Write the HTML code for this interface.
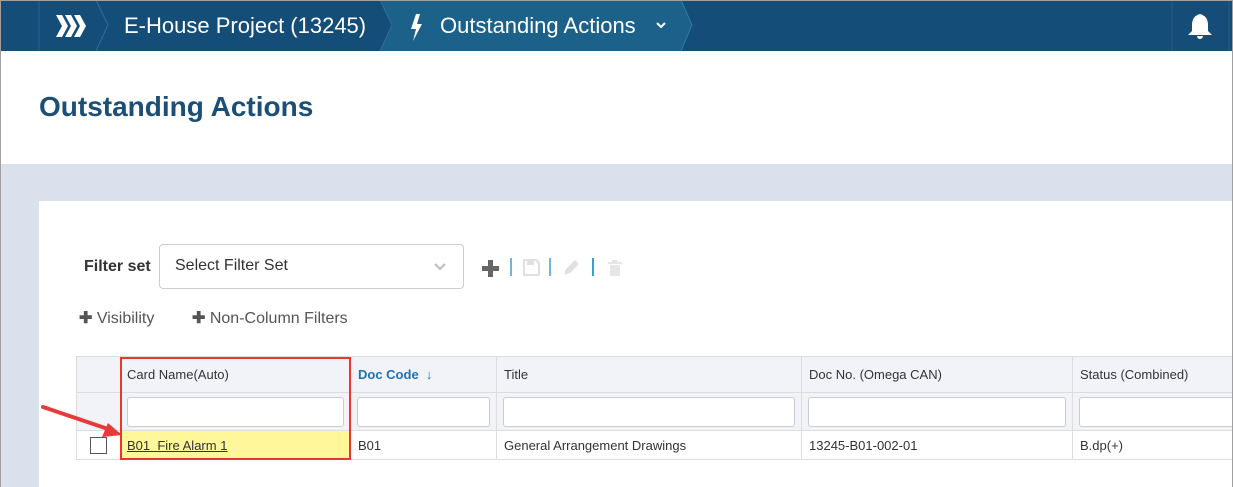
<!DOCTYPE html>
<html><head><style>
*{margin:0;padding:0;box-sizing:border-box}
body{width:1233px;height:487px;overflow:hidden;font-family:"Liberation Sans",sans-serif;background:#fff;position:relative}
.frame{position:absolute;inset:0;border:1px solid #a0a0a0;border-bottom:none;z-index:10;pointer-events:none}
.hdr{position:absolute;left:0;top:0;width:1233px;height:51px;background:#134d78}
.abs{position:absolute}
.t{position:absolute;white-space:nowrap}
table{border-collapse:collapse;table-layout:fixed}
td{overflow:hidden;white-space:nowrap}
</style></head><body>
<div class="hdr"></div>
<svg class="abs" style="left:0;top:0" width="1233" height="51">
<polygon points="380,0 681,0 692,25 681,51 380,51 392,25" fill="#1b6189"/>
<line x1="39" y1="0" x2="39" y2="51" stroke="#2a6090" stroke-width="1"/>
<polyline points="96,0 108,25 96,51" fill="none" stroke="#2e6e9c" stroke-width="1"/>
<polyline points="380,0 392,25 380,51" fill="none" stroke="#2e6e9c" stroke-width="1"/>
<polyline points="681,0 692,25 681,51" fill="none" stroke="#2e7aa6" stroke-width="1"/>
<line x1="1172" y1="0" x2="1172" y2="51" stroke="#2a5a84" stroke-width="1"/>
<line x1="1229" y1="0" x2="1229" y2="51" stroke="#2a5a84" stroke-width="1"/>
<g fill="#fff">
<polygon points="56,15 62,15 68,26 62,37 56,37 62,26"/>
<polygon points="65,15 71,15 77,26 71,37 65,37 71,26"/>
<polygon points="74,15 80,15 86,26 80,37 74,37 80,26"/>
<polygon points="416,14 411,29 416,29 413,41 422,24 417,24 420,14"/>
<path d="M1200 14 q-8 2 -8 11 v6 l-4 4 h24 l-4 -4 v-6 q0 -9 -8 -11z M1197 36 h6 a3 3 0 0 1 -6 0z"/>
</g>
<polyline points="657,23 661,27 665,23" fill="none" stroke="#fff" stroke-width="2"/>
</svg>
<div class="t" style="left:124px;top:13px;font-size:22px;color:#fff">E-House Project (13245)</div>
<div class="t" style="left:440px;top:13px;font-size:22px;color:#fff">Outstanding Actions</div>
<div class="t" style="left:39px;top:91px;font-size:28px;font-weight:bold;color:#1b4f78">Outstanding Actions</div>
<div class="abs" style="left:0;top:164px;width:1233px;height:323px;background:#dae1ec"></div>
<div class="abs" style="left:39px;top:201px;width:1194px;height:286px;background:#fff"></div>
<div class="t" style="left:84px;top:258px;font-size:16px;font-weight:bold;color:#333">Filter set</div>
<div class="abs" style="left:159px;top:244px;width:305px;height:45px;border:1px solid #ccc;border-radius:4px"></div>
<div class="t" style="left:175px;top:257px;font-size:16px;color:#333">Select Filter Set</div>
<svg class="abs" style="left:430px;top:260px" width="20" height="14"><polyline points="5,4 10,9 15,4" fill="none" stroke="#bbb" stroke-width="2"/></svg>
<svg class="abs" style="left:480px;top:255px" width="160" height="26">
<path d="M8 5h5v6h6v5h-6v6h-5v-6h-6v-5h6z" fill="#666"/>
<line x1="31" y1="3" x2="31" y2="21" stroke="#3aa0d0" stroke-width="1.5"/>
<path d="M44 5h12l3 3v12h-15z" fill="none" stroke="#e0e0e0" stroke-width="2"/>
<rect x="47" y="6" width="7" height="4" fill="#e0e0e0"/>
<line x1="70" y1="3" x2="70" y2="21" stroke="#3aa0d0" stroke-width="1.5"/>
<path d="M84 20l2-6 9-9 4 4-9 9z" fill="#e0e0e0"/>
<line x1="113" y1="3" x2="113" y2="21" stroke="#3aa0d0" stroke-width="2"/>
<path d="M128 7h14v2h-14z M132 5h6v2h-6z M130 10h10v11h-10z" fill="#e6e6e6"/>
</svg>
<div class="t" style="left:79px;top:308px;font-size:16px;color:#555"><b>✚</b> Visibility</div>
<div class="t" style="left:192px;top:308px;font-size:16px;color:#555"><b>✚</b> Non-Column Filters</div>
<table class="abs" style="left:76px;top:356px;width:1170px;font-size:13px;color:#333">
<colgroup><col style="width:44px"><col style="width:230px"><col style="width:146px"><col style="width:305px"><col style="width:271px"><col style="width:174px"></colgroup>
<tr style="height:36px;background:#f1f3f8">
<td style="border:1px solid #ddd"></td>
<td style="border:1px solid #ddd;padding-left:6px">Card Name(Auto)</td>
<td style="border:1px solid #ddd;padding-left:7px;color:#1d72b8;font-weight:bold">Doc Code &nbsp;↓</td>
<td style="border:1px solid #ddd;padding-left:7px">Title</td>
<td style="border:1px solid #ddd;padding-left:7px">Doc No. (Omega CAN)</td>
<td style="border:1px solid #ddd;padding-left:7px">Status (Combined)</td>
</tr>
<tr style="height:38px;background:#f1f3f8">
<td style="border:1px solid #ddd"></td>
<td style="border:1px solid #ddd;padding:0 6px"><div style="height:30px;background:#fff;border:1px solid #ccc;border-radius:3px"></div></td>
<td style="border:1px solid #ddd;padding:0 6px"><div style="height:30px;background:#fff;border:1px solid #ccc;border-radius:3px"></div></td>
<td style="border:1px solid #ddd;padding:0 6px"><div style="height:30px;background:#fff;border:1px solid #ccc;border-radius:3px"></div></td>
<td style="border:1px solid #ddd;padding:0 6px"><div style="height:30px;background:#fff;border:1px solid #ccc;border-radius:3px"></div></td>
<td style="border:1px solid #ddd;padding:0 6px"><div style="height:30px;background:#fff;border:1px solid #ccc;border-radius:3px"></div></td>
</tr>
<tr style="height:29px">
<td style="border:1px solid #ddd;text-align:center"><div style="width:17px;height:17px;border:1px solid #555;margin:0 auto"></div></td>
<td style="border:1px solid #ddd;padding-left:6px;background:#fff799;text-decoration:underline">B01&nbsp; Fire Alarm 1</td>
<td style="border:1px solid #ddd;padding-left:7px">B01</td>
<td style="border:1px solid #ddd;padding-left:7px">General Arrangement Drawings</td>
<td style="border:1px solid #ddd;padding-left:7px">13245-B01-002-01</td>
<td style="border:1px solid #ddd;padding-left:7px">B.dp(+)</td>
</tr>
</table>
<div class="abs" style="left:120px;top:357px;width:231px;height:103px;border:2px solid #ee3333"></div>
<svg class="abs" style="left:38px;top:398px" width="90" height="50">
<line x1="5" y1="9" x2="70" y2="31" stroke="#e83a3a" stroke-width="4" stroke-linecap="round"/>
<polygon points="84,37 64,39 70,25" fill="#e83a3a"/>
</svg>
<div class="frame"></div>
</body></html>
